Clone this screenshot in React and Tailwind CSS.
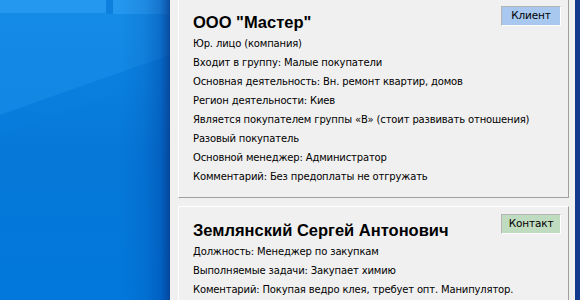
const cards = [
  {
    title: 'ООО "Мастер"',
    badge: 'Клиент',
    badgeClass: 'bg-[#a8c8f0]',
    lines: [
      'Юр. лицо (компания)',
      'Входит в группу: Малые покупатели',
      'Основная деятельность: Вн. ремонт квартир, домов',
      'Регион деятельности: Киев',
      'Является покупателем группы «В» (стоит развивать отношения)',
      'Разовый покупатель',
      'Основной менеджер: Администратор',
      'Комментарий: Без предоплаты не отгружать',
    ],
    cardClass: '-mt-[2px] h-[200px]',
  },
  {
    title: 'Землянский Сергей Антонович',
    badge: 'Контакт',
    badgeClass: 'bg-[#c0dcc0]',
    lines: [
      'Должность: Менеджер по закупкам',
      'Выполняемые задачи: Закупает химию',
      'Коментарий: Покупая ведро клея, требует опт. Манипулятор.',
    ],
    cardClass: 'h-[120px]',
  },
];

function Wallpaper() {
  return (
    <svg className="h-full w-full" viewBox="0 0 170 300" preserveAspectRatio="none">
      <defs>
        <linearGradient id="base" x1="0" y1="0" x2="0" y2="1">
          <stop offset="0" stopColor="#1088e4" />
          <stop offset="0.5" stopColor="#0678d8" />
          <stop offset="1" stopColor="#0278dc" />
        </linearGradient>
        <linearGradient id="shade" x1="0" y1="0" x2="1" y2="0">
          <stop offset="0" stopColor="#003f9c" stopOpacity="0" />
          <stop offset="0.5" stopColor="#003f9c" stopOpacity="0.15" />
          <stop offset="0.8" stopColor="#00409e" stopOpacity="0.4" />
          <stop offset="1" stopColor="#073a8a" stopOpacity="0.8" />
        </linearGradient>
      </defs>
      <rect width="170" height="300" fill="url(#base)" />
      <polygon points="0,0 170,0 170,55 0,115" fill="#1a8fea" opacity="0.55" />
      <polygon points="0,115 170,55 170,75 0,135" fill="#0a80de" opacity="0.4" />
      <rect x="0" y="0" width="106" height="13" fill="#2497ee" />
      <rect x="113" y="0" width="57" height="14" fill="#2497ee" />
      <rect x="106" y="0" width="7" height="14" fill="#0d7fdc" />
      <rect x="120" y="0" width="50" height="300" fill="url(#shade)" />
    </svg>
  );
}

const bodyFont = { fontFamily: '"DejaVu Sans", sans-serif' };

function Card({ card }) {
  return (
    <div
      className={`relative shrink-0 border border-t-white border-l-white border-r-[#a0a0a0] border-b-[#a0a0a0] bg-[#f0f0f0] pl-[14px] pt-[13px] ${card.cardClass}`}
    >
      <div
        className={`absolute right-[7px] top-[7px] flex h-[20px] w-[60px] items-center justify-center border border-t-[#b4b4b4] border-l-[#b4b4b4] border-r-white border-b-white text-[10.5px] tracking-[-0.15px] text-black ${card.badgeClass}`}
        style={bodyFont}
      >
        {card.badge}
      </div>
      <div className="mb-px whitespace-nowrap text-[16.5px] font-bold leading-[21px] text-black">
        {card.title}
      </div>
      {card.lines.map((line) => (
        <div
          key={line}
          className="whitespace-nowrap text-[10px] leading-[19px] tracking-[-0.15px] text-black"
          style={bodyFont}
        >
          {line}
        </div>
      ))}
    </div>
  );
}

export default function App() {
  return (
    <div
      className="flex h-[300px] w-[580px] overflow-hidden"
      style={{ fontFamily: '"Liberation Sans", Arial, sans-serif' }}
    >
      <div className="h-full w-[170px] shrink-0">
        <Wallpaper />
      </div>
      <div className="flex h-full w-[405px] shrink-0 flex-col gap-2 bg-[#f0f0f0] pl-2 pr-[6px]">
        {cards.map((card) => (
          <Card key={card.title} card={card} />
        ))}
      </div>
      <div className="h-full flex-1 bg-[#12398e]" />
    </div>
  );
}
